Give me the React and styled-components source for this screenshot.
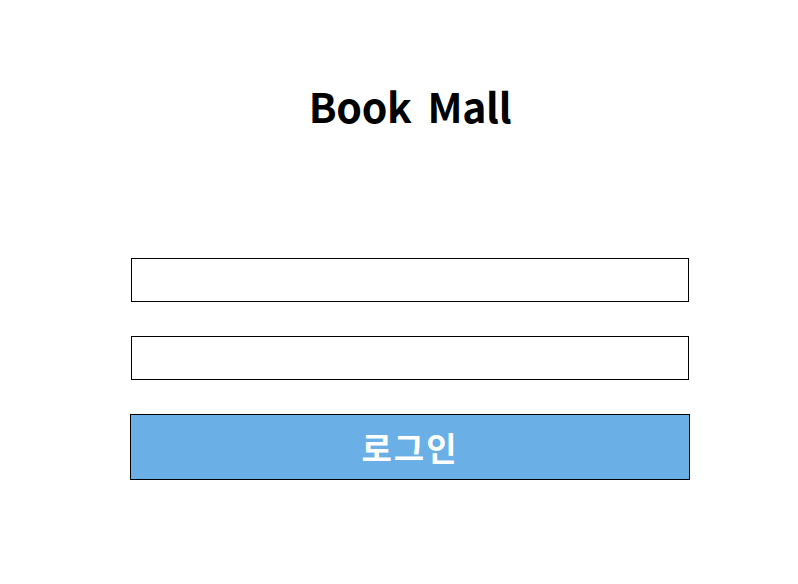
import React from 'react';
import styled, { createGlobalStyle } from 'styled-components';

const GlobalStyle = createGlobalStyle`
    body {
        margin: 0;
        background: #fff;
        font-family: "Noto Sans CJK KR", "Noto Sans", sans-serif;
    }
`;

const Page = styled.div`
    width: 560px;
    margin-left: 130px;
    display: flex;
    flex-direction: column;
    align-items: center;
`;

const Title = styled.h1`
    margin: 73px 0 0;
    height: 64px;
    line-height: 64px;
    font-size: 41px;
    font-weight: 700;
    word-spacing: 7px;
    letter-spacing: -0.3px;
    color: #000;
`;

const Form = styled.form`
    width: 100%;
    margin-top: 121px;
    display: flex;
    flex-direction: column;
    align-items: center;
    gap: 34px;
`;

const Input = styled.input`
    box-sizing: border-box;
    width: 558px;
    height: 44px;
    border: 1px solid #000;
    outline: none;
    padding: 0 10px;
    font-size: 16px;
    font-family: inherit;
`;

const Button = styled.button`
    box-sizing: border-box;
    width: 560px;
    height: 66px;
    border: 1px solid #000;
    background: #6aafe6;
    color: #fff;
    font-size: 33px;
    font-weight: 700;
    font-family: inherit;
    letter-spacing: 2px;
    cursor: pointer;
`;

const App = () => {
    return (
        <Page>
            <GlobalStyle />
            <Title>Book Mall</Title>
            <Form onSubmit={(e) => e.preventDefault()}>
                <Input type='text' />
                <Input type='password' />
                <Button type='submit'>로그인</Button>
            </Form>
        </Page>
    );
};

export default App;
